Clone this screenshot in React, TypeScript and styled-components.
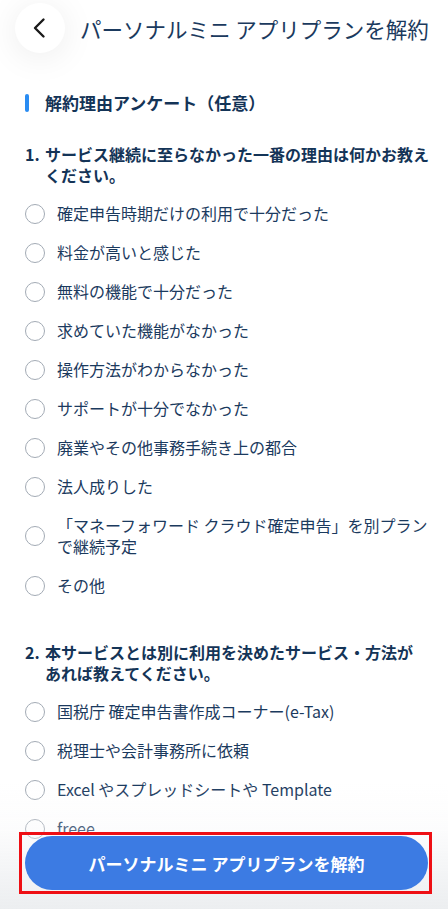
import styled, { createGlobalStyle } from "styled-components"

const colors = {
  TEXT: "#1b3a5e",
  HEADING: "#143457",
  ACCENT: "#2a8cf2",
  BUTTON: "#3c7be3",
  RADIO: "#a3abb5",
}

const GlobalStyle = createGlobalStyle`
  html, body {
    margin: 0;
    padding: 0;
    background: #ffffff;
  }
  body {
    font-family: "Noto Sans CJK JP", "Noto Sans", sans-serif;
    color: ${colors.TEXT};
    -webkit-font-smoothing: antialiased;
  }
`

const Page = styled.div`
  width: 448px;
  height: 909px;
  overflow: hidden;
  box-sizing: border-box;
`

const Header = styled.header`
  height: 56px;
  display: flex;
  align-items: center;
  gap: 15px;
  padding-left: 15px;
`

const BackButton = styled.button`
  width: 50px;
  height: 50px;
  border-radius: 50%;
  border: none;
  background: #ffffff;
  box-shadow: 0 4px 34px rgba(0, 0, 0, 0.08);
  display: flex;
  align-items: center;
  justify-content: center;
  padding: 0;
  flex-shrink: 0;
`

const Title = styled.h1`
  margin: 0;
  font-size: 21.5px;
  font-weight: 400;
  color: ${colors.TEXT};
  white-space: nowrap;
`

const Content = styled.main`
  padding: 0 10px 0 25px;
`

const SectionTitle = styled.h2`
  display: flex;
  align-items: center;
  gap: 16px;
  margin: 35px 0 0;
  font-size: 17px;
  line-height: 24px;
  font-weight: 700;
  color: ${colors.HEADING};

  &::before {
    content: "";
    width: 4px;
    height: 18px;
    border-radius: 2px;
    background: ${colors.ACCENT};
  }
`

const Question = styled.div<{ $gap: number }>`
  display: flex;
  margin: ${(p) => p.$gap}px 0 8px;
  font-size: 16px;
  line-height: 21px;
  font-weight: 700;
  color: ${colors.HEADING};
`

const QuestionNumber = styled.span`
  width: 20px;
  flex-shrink: 0;
`

const QuestionText = styled.p<{ $maxWidth?: number }>`
  margin: 0;
  flex: 1;
  max-width: ${(p) => (p.$maxWidth ? `${p.$maxWidth}px` : "none")};
`

const OptionList = styled.ul`
  list-style: none;
  margin: 0;
  padding: 0 8px 0 0;
`

const OptionRow = styled.li`
  display: flex;
  align-items: center;
  gap: 12px;
  padding: 9px 0;
  font-size: 16px;
  line-height: 21px;
  color: ${colors.TEXT};
`

const Radio = styled.span`
  width: 20px;
  height: 20px;
  box-sizing: border-box;
  border-radius: 50%;
  border: 1.5px solid ${colors.RADIO};
  flex-shrink: 0;
`

const Footer = styled.div`
  position: fixed;
  left: 0;
  right: 0;
  bottom: 0;
  height: 125px;
  display: flex;
  align-items: flex-end;
  padding: 0 16px 15px 19px;
  box-sizing: border-box;
  background: linear-gradient(
    to bottom,
    rgba(255, 255, 255, 0) 0%,
    rgba(244, 245, 247, 0.25) 35%,
    #eceef0 100%
  );
`

const Highlight = styled.div`
  flex: 1;
  border: 3px solid #ee0f14;
  padding: 1px 1px 1px 3px;
`

const SubmitButton = styled.button`
  width: 100%;
  height: 54px;
  border: none;
  border-radius: 27px;
  background: ${colors.BUTTON};
  color: #ffffff;
  font-family: inherit;
  font-size: 17px;
  font-weight: 700;
  display: block;
`

const reasons = [
  "確定申告時期だけの利用で十分だった",
  "料金が高いと感じた",
  "無料の機能で十分だった",
  "求めていた機能がなかった",
  "操作方法がわからなかった",
  "サポートが十分でなかった",
  "廃業やその他事務手続き上の都合",
  "法人成りした",
  "「マネーフォワード クラウド確定申告」を別プランで継続予定",
  "その他",
]

const alternatives = [
  "国税庁 確定申告書作成コーナー(e-Tax)",
  "税理士や会計事務所に依頼",
  "Excel やスプレッドシートや Template",
  "freee",
]

const ChevronLeft = () => (
  <svg width="24" height="24" viewBox="0 0 24 24" fill="none">
    <path
      d="M15.5 3.5 7 12l8.5 8.5"
      stroke="#1a1a1a"
      strokeWidth="2.4"
      strokeLinecap="round"
      strokeLinejoin="round"
    />
  </svg>
)

export default function App() {
  return (
    <Page>
      <GlobalStyle />
      <Header>
        <BackButton aria-label="戻る">
          <ChevronLeft />
        </BackButton>
        <Title>パーソナルミニ アプリプランを解約</Title>
      </Header>
      <Content>
        <SectionTitle>解約理由アンケート（任意）</SectionTitle>

        <Question $gap={29}>
          <QuestionNumber>1.</QuestionNumber>
          <QuestionText>
            サービス継続に至らなかった一番の理由は何かお教えください。
          </QuestionText>
        </Question>
        <OptionList>
          {reasons.map((r) => (
            <OptionRow key={r}>
              <Radio />
              {r}
            </OptionRow>
          ))}
        </OptionList>

        <Question $gap={37}>
          <QuestionNumber>2.</QuestionNumber>
          <QuestionText $maxWidth={372}>
            本サービスとは別に利用を決めたサービス・方法があれば教えてください。
          </QuestionText>
        </Question>
        <OptionList>
          {alternatives.map((a) => (
            <OptionRow key={a}>
              <Radio />
              {a}
            </OptionRow>
          ))}
        </OptionList>
      </Content>
      <Footer>
        <Highlight>
          <SubmitButton>パーソナルミニ アプリプランを解約</SubmitButton>
        </Highlight>
      </Footer>
    </Page>
  )
}
